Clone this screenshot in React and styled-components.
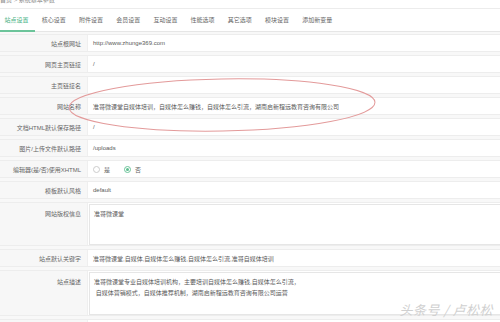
import React from 'react'
import styled, { createGlobalStyle } from 'styled-components'

const GlobalStyle = createGlobalStyle`
  html, body {
    margin: 0;
    padding: 0;
    background: #fff;
  }
  body {
    font-family: "Liberation Sans", "Noto Sans CJK SC", sans-serif;
    color: #555;
    overflow: hidden;
  }
`

const Page = styled.div`
  position: relative;
  width: 500px;
  height: 322px;
  overflow: hidden;
`

const Crumb = styled.div`
  height: 8px;
  border-bottom: 1px solid #ececec;
  overflow: hidden;
  font-size: 6px;
  color: #888;

  span {
    display: block;
    margin-top: -4px;
    line-height: 8px;
  }
`

const TabBar = styled.nav`
  display: flex;
  height: 22px;
  margin-left: -2px;
  border-bottom: 1px solid #e6e6e6;
`

const Tab = styled.div`
  display: flex;
  align-items: center;
  padding: 0 6.6px;
  font-size: 6px;
  font-family: "Noto Sans CJK SC", sans-serif;
  color: ${p => (p.$active ? '#45b183' : '#666')};
  border-bottom: 2px solid ${p => (p.$active ? '#6cc49a' : 'transparent')};
  margin-bottom: -1px;
`

const Form = styled.div`
  display: flex;
  flex-direction: column;
  gap: 3px;
  padding-top: 2px;
  background: #f8f8f8;
`

const Row = styled.div`
  display: grid;
  grid-template-columns: 88px 1fr;
  height: ${p => p.$h || 18}px;
  background: #fff;
  border-top: 1px solid #ededed;
  border-bottom: 1px solid #ededed;
  box-sizing: border-box;
`

const Label = styled.div`
  background: #f7f7f7;
  border-right: 1px solid #efefef;
  display: flex;
  justify-content: flex-end;
  align-items: ${p => (p.$top ? 'flex-start' : 'center')};
  padding-right: 6px;
  padding-top: ${p => (p.$top ? '6px' : '0')};
  font-size: 6px;
  color: #666;
`

const Value = styled.div`
  display: flex;
  align-items: center;
  padding-left: 5px;
  font-size: 6px;
  color: #5a5a5a;
  white-space: nowrap;
`

const Area = styled.div`
  margin: 1px 0 0 1px;
  border: 1px solid #e6e6e6;
  border-right: none;
  padding: 4px 4px;
  font-size: 6px;
  line-height: 10.5px;
  color: #5a5a5a;
  white-space: nowrap;
`

const Radio = styled.label`
  display: flex;
  align-items: center;
  gap: 4px;
  margin-right: 14px;
  font-size: 6px;
  color: #666;
`

const Dot = styled.span`
  width: 7px;
  height: 7px;
  border-radius: 50%;
  border: 1px solid ${p => (p.$on ? '#6cc49a' : '#cccccc')};
  display: flex;
  align-items: center;
  justify-content: center;
  box-sizing: border-box;

  &::after {
    content: '';
    width: 3px;
    height: 3px;
    border-radius: 50%;
    background: ${p => (p.$on ? '#5cbf8f' : 'transparent')};
  }
`

const Mark = styled.svg`
  position: absolute;
  left: 0;
  top: 0;
  pointer-events: none;
`

const Watermark = styled.div`
  position: absolute;
  right: 7px;
  bottom: 3px;
  font-family: "Noto Sans CJK SC", sans-serif;
  font-size: 13px;
  color: #d0d0d0;
  font-style: italic;
  letter-spacing: 0.5px;
`

const tabs = ['站点设置', '核心设置', '附件设置', '会员设置', '互动设置', '性能选项', '其它选项', '模块设置', '添加新变量']

const App = () => {
  return (
    <Page>
      <GlobalStyle />
      <Crumb><span>首页 &gt; 系统基本参数</span></Crumb>
      <TabBar>
        {tabs.map((t, i) => (
          <Tab key={t} $active={i === 0}>{t}</Tab>
        ))}
      </TabBar>

      <Form>
        <Row>
          <Label>站点根网址</Label>
          <Value>http://www.zhunge369.com</Value>
        </Row>
        <Row>
          <Label>网页主页链接</Label>
          <Value>/</Value>
        </Row>
        <Row>
          <Label>主页链接名</Label>
          <Value></Value>
        </Row>
        <Row>
          <Label>网站名称</Label>
          <Value>准哥微课堂自媒体培训，自媒体怎么赚钱，自媒体怎么引流，湖南启新程远教育咨询有限公司</Value>
        </Row>
        <Row>
          <Label>文档HTML默认保存路径</Label>
          <Value>/</Value>
        </Row>
        <Row>
          <Label>图片/上传文件默认路径</Label>
          <Value>/uploads</Value>
        </Row>
        <Row>
          <Label>编辑器(是/否)使用XHTML</Label>
          <Value>
            <Radio><Dot />是</Radio>
            <Radio><Dot $on />否</Radio>
          </Value>
        </Row>
        <Row>
          <Label>模板默认风格</Label>
          <Value>default</Value>
        </Row>
        <Row $h={44}>
          <Label $top>网站版权信息</Label>
          <Area>准哥微课堂</Area>
        </Row>
        <Row>
          <Label>站点默认关键字</Label>
          <Value>准哥微课堂,自媒体,自媒体怎么赚钱,自媒体怎么引流,准哥自媒体培训</Value>
        </Row>
        <Row $h={46}>
          <Label $top>站点描述</Label>
          <Area>
            准哥微课堂专业自媒体培训机构，主要培训自媒体怎么赚钱,自媒体怎么引流，<br />
            &nbsp;自媒体营销模式，自媒体推荐机制，湖南启新程远教育咨询有限公司运营
          </Area>
        </Row>
        <Row>
          <Label></Label>
          <Value></Value>
        </Row>
      </Form>

      <Mark width="500" height="322">
        <ellipse cx="222" cy="105" rx="153" ry="26" fill="none" stroke="#e39a9a" strokeWidth="1" transform="rotate(-1 222 105)" />
      </Mark>
      <Watermark>头条号 / 卢松松</Watermark>
    </Page>
  )
}

export default App
